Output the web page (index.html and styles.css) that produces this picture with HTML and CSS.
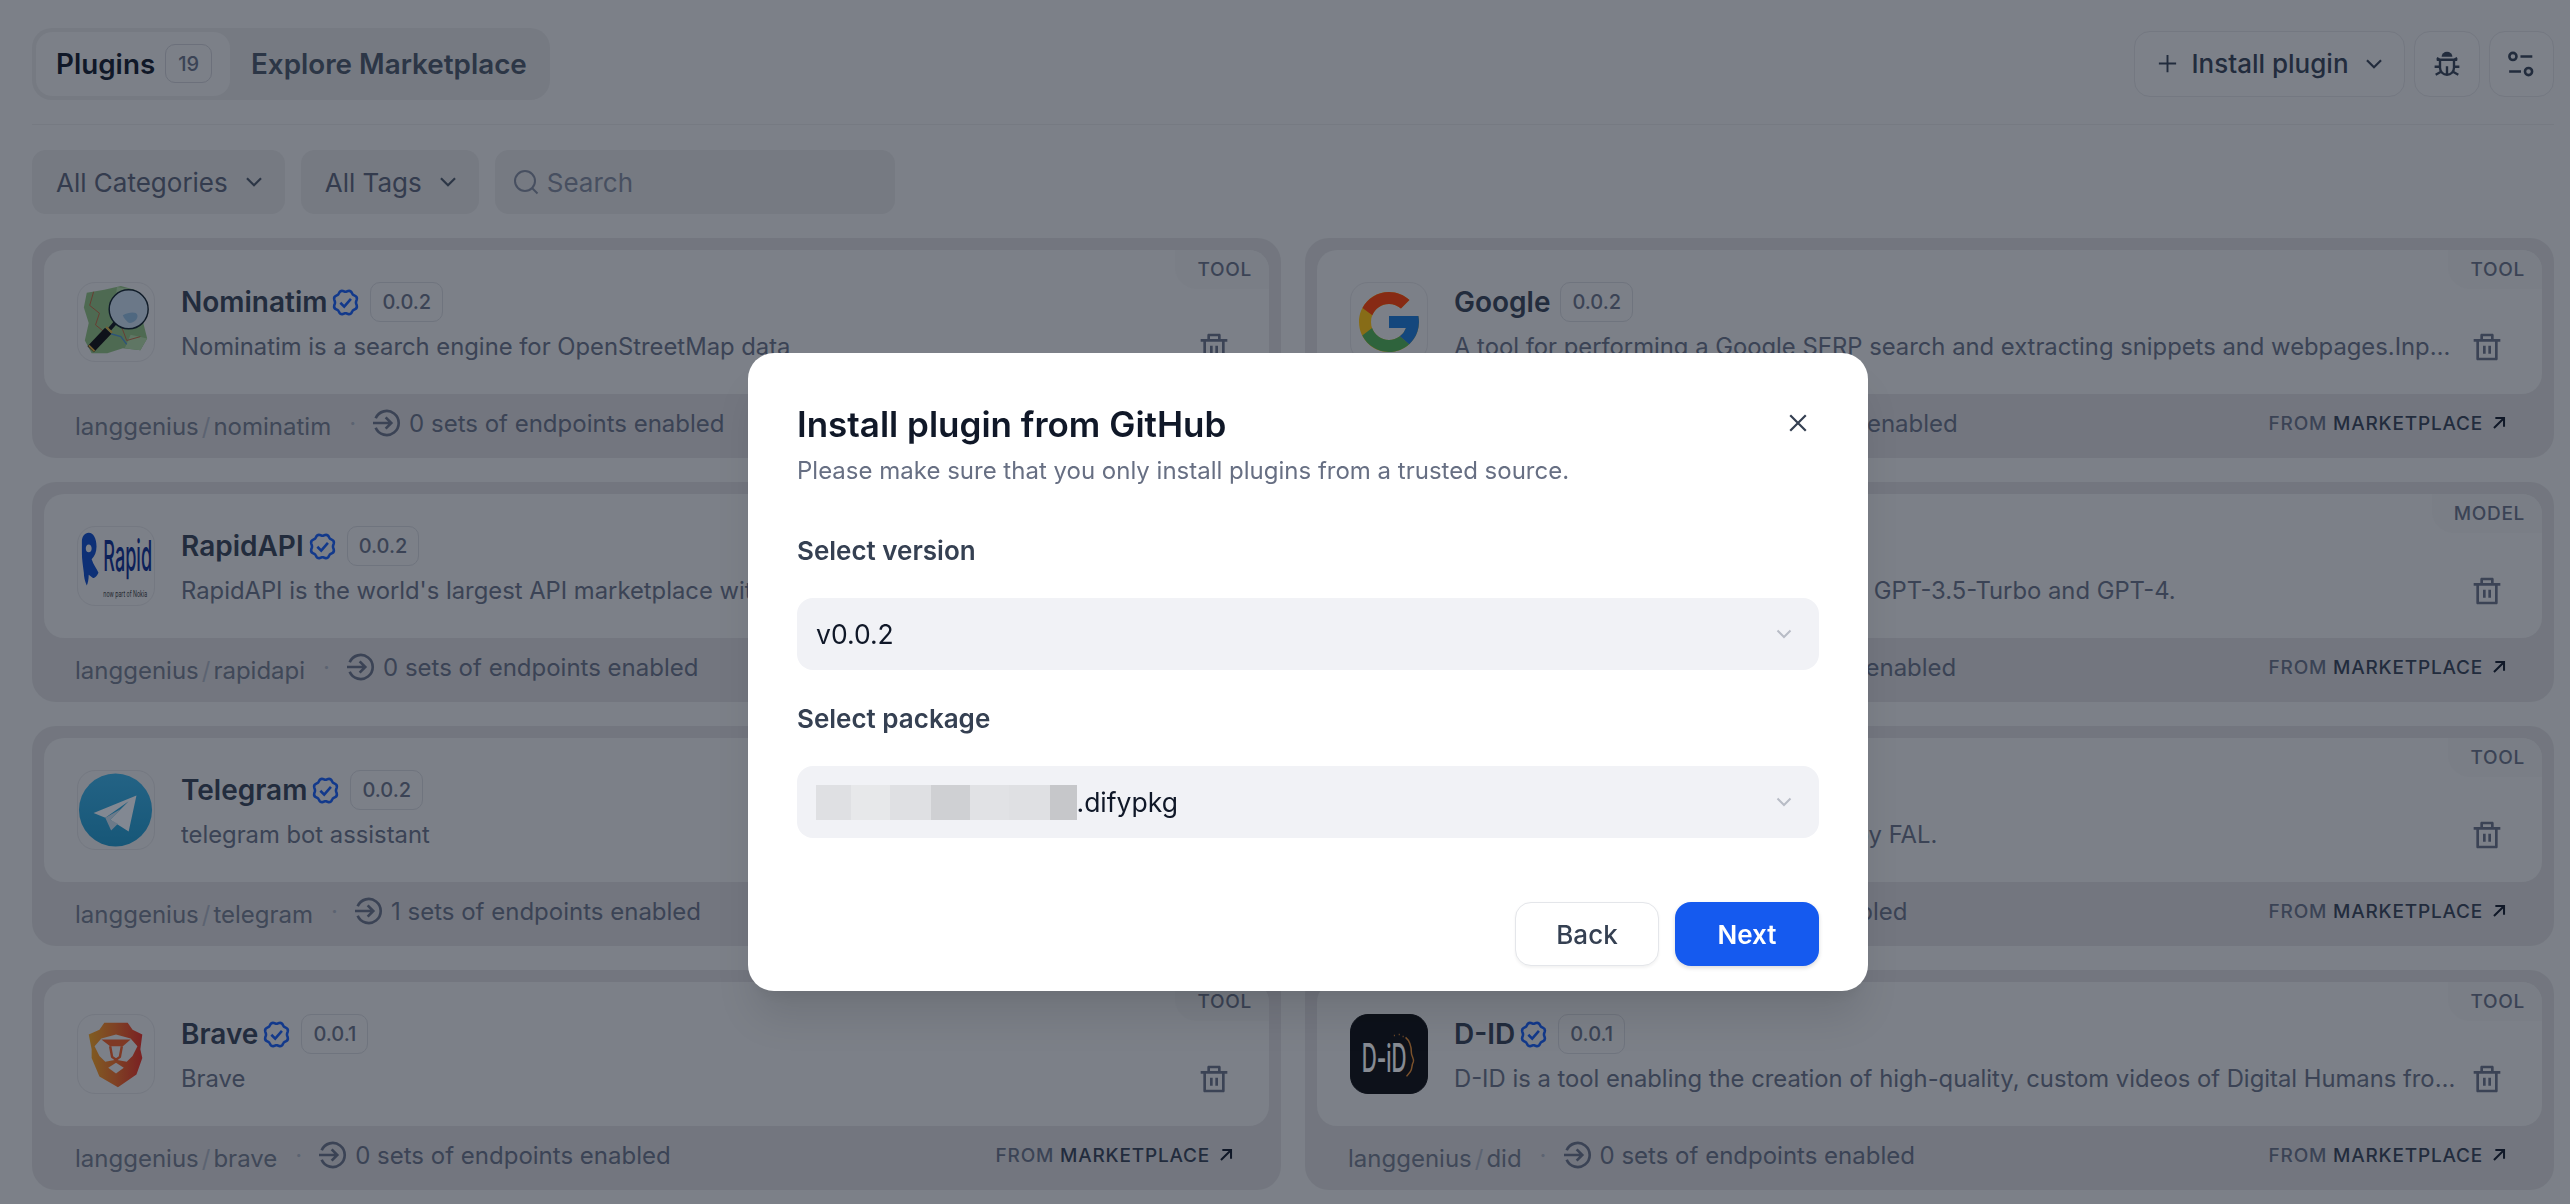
FILE: index.html
```html
<!DOCTYPE html>
<html lang="en">
<head>
<meta charset="utf-8">
<title>Plugins</title>
<link rel="stylesheet" href="styles.css">
</head>
<body>
<svg class="defs" width="0" height="0" aria-hidden="true">
  <symbol id="chev" viewBox="0 0 24 24"><path d="M5.5 8.5 12 15l6.5-6.5" fill="none" stroke="currentColor" stroke-width="2"/></symbol>
  <symbol id="trash" viewBox="0 0 24 24"><path fill="currentColor" d="M17 6H22V8H20V21C20 21.5523 19.5523 22 19 22H5C4.44772 22 4 21.5523 4 21V8H2V6H7V3C7 2.44772 7.44772 2 8 2H16C16.5523 2 17 2.44772 17 3V6ZM18 8H6V20H18V8ZM9 11H11V17H9V11ZM13 11H15V17H13V11ZM9 4V6H15V4H9Z"/></symbol>
  <symbol id="badge" viewBox="0 0 24 24"><path fill="none" stroke="currentColor" stroke-width="2" d="M10 3.1C9 2.8 7.900 3.200 7.300 4.100L6.500 5.600C6.400 5.800 6.200 6 6 6.100L4.500 6.900C3.500 7.400 3 8.600 3.300 9.700L3.800 11.300C3.900 11.700 3.900 12.300 3.800 12.700L3.300 14.300C3 15.400 3.500 16.600 4.500 17.100L6 17.900C6.200 18 6.400 18.200 6.500 18.400L7.300 19.900C7.900 20.800 9 21.200 10 20.900L11.600 20.400C11.900 20.300 12.100 20.300 12.400 20.400L14 20.900C15 21.200 16.100 20.800 16.700 19.900L17.500 18.400C17.600 18.200 17.800 18 18 17.900L19.500 17.100C20.500 16.600 21 15.400 20.700 14.300L20.200 12.700C20.100 12.300 20.100 11.700 20.200 11.300L20.700 9.700C21 8.600 20.500 7.400 19.500 6.900L18 6.100C17.800 6 17.600 5.800 17.500 5.600L16.700 4.100C16.100 3.200 15 2.800 14 3.100L12.400 3.600C12.100 3.700 11.900 3.700 11.600 3.600Z"/><path fill="none" stroke="currentColor" stroke-width="2" d="M8 12.200l3 3 5.200-6"/></symbol>
  <symbol id="login" viewBox="0 0 24 24"><path fill="none" stroke="currentColor" stroke-width="2" d="M3.500 8.500A9 9 0 1 1 3.500 15.500M1.500 12H15M11 7.800 15.200 12 11 16.200"/></symbol>
  <symbol id="arrow" viewBox="0 0 24 24"><path fill="none" stroke="currentColor" stroke-width="2.200" d="M6.500 17.500 17 7M8 6.500h9.500V16"/></symbol>
</svg>

<div class="page">
  <header class="topbar">
    <nav class="tabs">
      <div class="tab tab-active">Plugins <span class="count">19</span></div>
      <div class="tab">Explore Marketplace</div>
    </nav>
    <div class="actions">
      <button class="btn btn-install">
        <svg class="plus" viewBox="0 0 24 24"><path d="M12 3v18M3 12h18" fill="none" stroke="currentColor" stroke-width="2"/></svg>
        <span>Install plugin</span>
        <svg class="chev-sm"><use href="#chev"/></svg>
      </button>
      <button class="btn btn-icon">
        <svg class="tool-ico" viewBox="0 0 26 26" fill="none" stroke="currentColor" stroke-width="2.200">
          <path d="M8 6.200a5 4.600 0 0 1 10 0z" fill="currentColor" stroke="none"/>
          <path d="M3.500 9h19M6.500 9v7.500a6.500 6.500 0 0 0 13 0V9M13 15v8M1.500 15.500h5M19.500 15.500h5M2.500 23l4.500-2.500M23.500 23 19 20.500M3.500 7.500 6.500 9M22.500 7.500 19.500 9"/>
        </svg>
      </button>
      <button class="btn btn-icon">
        <svg class="tool-ico" viewBox="0 0 26 26" fill="none" stroke="currentColor" stroke-width="2.400">
          <circle cx="5.500" cy="6" r="3.300"/><path d="M12.500 6h11M2 20h11"/><circle cx="20" cy="20" r="3.300"/>
        </svg>
      </button>
    </div>
  </header>

  <section class="filters">
    <div class="filter">All Categories <svg class="chev-sm"><use href="#chev"/></svg></div>
    <div class="filter">All Tags <svg class="chev-sm"><use href="#chev"/></svg></div>
    <div class="search">
      <svg class="search-ico" viewBox="0 0 26 26" fill="none" stroke="currentColor" stroke-width="2"><circle cx="12" cy="12" r="10"/><path d="M19 19l5.500 5.500"/></svg>
      Search
    </div>
  </section>

  <main class="grid">
    <!-- Nominatim -->
    <article class="card">
      <div class="card-body">
        <span class="tag">TOOL</span>
        <div class="logo">
          <svg viewBox="0 0 78 78">
            <path d="M9 9 27 6 44 2 58 6 65 22 67 40 71 56 64 68 46 66 30 71 14 71 7 58 11 40 6 24Z" fill="#8dbd7c"/>
            <path d="M40 3 58 6 64 24 50 30 38 20ZM54 52 71 56 64 68 48 66Z" fill="#aed5a0"/>
            <path d="M16 8 12 22 22 30 18 42 28 50 22 60M44 42 50 58 64 54" fill="none" stroke="#c0603c" stroke-width="1"/>
            <path d="M30 50 44 54 50 62" fill="none" stroke="#4a90c8" stroke-width="1.500"/>
            <circle cx="52" cy="26" r="20" fill="#c6d8e8" stroke="#10202a" stroke-width="1.500"/>
            <path d="M46 32c6-3 14-4 15 0 1 5-7 10-10 7-2-2-4-4-5-7Z" fill="#8fb8d8"/>
            <path d="M38 40 32 47" stroke="#10151c" stroke-width="4"/>
            <path d="M31 48 13 67" stroke="#0d0d0d" stroke-width="9"/>
            <path d="M29 44 35 50M11 63 17 69" stroke="#d9a93a" stroke-width="2"/>
          </svg>
        </div>
        <div class="info">
          <div class="title-row"><h3 class="name">Nominatim</h3><svg class="verified"><use href="#badge"/></svg><span class="ver">0.0.2</span></div>
          <div class="desc-row"><p class="desc">Nominatim is a search engine for OpenStreetMap data</p><svg class="trash"><use href="#trash"/></svg></div>
        </div>
      </div>
      <footer class="card-foot">
        <span class="org">langgenius<i class="slash">/</i>nominatim</span><span class="dot">·</span>
        <svg class="login"><use href="#login"/></svg><span class="endpoints">0 sets of endpoints enabled</span>
        <span class="source">FROM <b>MARKETPLACE</b><svg class="arrow"><use href="#arrow"/></svg></span>
      </footer>
    </article>

    <!-- Google -->
    <article class="card">
      <div class="card-body">
        <span class="tag">TOOL</span>
        <div class="logo">
          <svg viewBox="0 0 48 48" class="g-logo">
            <path fill="#FFC107" d="M43.611 20.083H42V20H24v8h11.303c-1.649 4.657-6.08 8-11.303 8-6.627 0-12-5.373-12-12s5.373-12 12-12c3.059 0 5.842 1.154 7.961 3.039l5.657-5.657C34.046 6.053 29.268 4 24 4 12.955 4 4 12.955 4 24s8.955 20 20 20 20-8.955 20-20c0-1.341-.138-2.65-.389-3.917z"/>
            <path fill="#FF3D00" d="M6.306 14.691l6.571 4.819C14.655 15.108 18.961 12 24 12c3.059 0 5.842 1.154 7.961 3.039l5.657-5.657C34.046 6.053 29.268 4 24 4 16.318 4 9.656 8.337 6.306 14.691z"/>
            <path fill="#4CAF50" d="M24 44c5.166 0 9.86-1.977 13.409-5.192l-6.19-5.238A11.91 11.91 0 0 1 24 36c-5.202 0-9.619-3.317-11.283-7.946l-6.522 5.025C9.505 39.556 16.227 44 24 44z"/>
            <path fill="#1976D2" d="M43.611 20.083H42V20H24v8h11.303a12.04 12.04 0 0 1-4.087 5.571l6.193 5.237C36.971 39.205 44 34 44 24c0-1.341-.138-2.65-.389-3.917z"/>
          </svg>
        </div>
        <div class="info">
          <div class="title-row"><h3 class="name">Google</h3><span class="ver">0.0.2</span></div>
          <div class="desc-row"><p class="desc">A tool for performing a Google SERP search and extracting snippets and webpages.Input should be a search query.</p><svg class="trash"><use href="#trash"/></svg></div>
        </div>
      </div>
      <footer class="card-foot">
        <span class="org">langgenius<i class="slash">/</i>google</span><span class="dot">·</span>
        <svg class="login"><use href="#login"/></svg><span class="endpoints">0 sets of endpoints enabled</span>
        <span class="source">FROM <b>MARKETPLACE</b><svg class="arrow"><use href="#arrow"/></svg></span>
      </footer>
    </article>

    <!-- RapidAPI -->
    <article class="card">
      <div class="card-body">
        <span class="tag">TOOL</span>
        <div class="logo">
          <svg viewBox="0 0 78 78">
            <path fill-rule="evenodd" d="M11 5C16 5 19 11 19 19C19 25 17 29 14 32C16 38 19 41 21 46C19 50 17 52 15 51L11 48C11 53 10 57 9 59C7 55 6 50 6 46C5 38 4 32 4 26V14C4 9 7 5 11 5ZM11 17c-2 0-3 2-3 4s1 4 3 4 3-2 3-4-1-4-3-4Z" fill="#0b49c4"/>
            <text class="rapid" x="26" y="44" textLength="50" lengthAdjust="spacingAndGlyphs">Rapid</text>
            <text class="rapid-sub" x="26" y="71" textLength="45" lengthAdjust="spacingAndGlyphs">now part of Nokia</text>
          </svg>
        </div>
        <div class="info">
          <div class="title-row"><h3 class="name">RapidAPI</h3><svg class="verified"><use href="#badge"/></svg><span class="ver">0.0.2</span></div>
          <div class="desc-row"><p class="desc">RapidAPI is the world's largest API marketplace with over 1,000,000 developers and 10,000 APIs.</p><svg class="trash"><use href="#trash"/></svg></div>
        </div>
      </div>
      <footer class="card-foot">
        <span class="org">langgenius<i class="slash">/</i>rapidapi</span><span class="dot">·</span>
        <svg class="login"><use href="#login"/></svg><span class="endpoints">0 sets of endpoints enabled</span>
        <span class="source">FROM <b>MARKETPLACE</b><svg class="arrow"><use href="#arrow"/></svg></span>
      </footer>
    </article>

    <!-- OpenAI -->
    <article class="card">
      <div class="card-body">
        <span class="tag">MODEL</span>
        <div class="logo"></div>
        <div class="info">
          <div class="title-row"><h3 class="name">OpenAI</h3><span class="ver">0.0.2</span></div>
          <div class="desc-row"><p class="desc">Models provided by OpenAI, such as GPT-3.5-Turbo and GPT-4.</p><svg class="trash"><use href="#trash"/></svg></div>
        </div>
      </div>
      <footer class="card-foot">
        <span class="org">langgenius<i class="slash">/</i>openai</span><span class="dot">·</span>
        <svg class="login"><use href="#login"/></svg><span class="endpoints">0 sets of endpoints enabled</span>
        <span class="source">FROM <b>MARKETPLACE</b><svg class="arrow"><use href="#arrow"/></svg></span>
      </footer>
    </article>

    <!-- Telegram -->
    <article class="card">
      <div class="card-body">
        <span class="tag">TOOL</span>
        <div class="logo">
          <svg viewBox="0 0 78 78">
            <defs><linearGradient id="tg" x1="0" y1="0" x2="0" y2="1"><stop offset="0" stop-color="#37aee2"/><stop offset="1" stop-color="#1e96c8"/></linearGradient></defs>
            <circle cx="38.500" cy="39" r="37.500" fill="url(#tg)"/>
            <path d="M60 24 16 42 28 47 52 30 33 49 52 61Z" fill="#f4f9fc"/>
            <path d="M28 47 34 60 41 53 33 49 44 38Z" fill="#c9dcea"/>
          </svg>
        </div>
        <div class="info">
          <div class="title-row"><h3 class="name">Telegram</h3><svg class="verified"><use href="#badge"/></svg><span class="ver">0.0.2</span></div>
          <div class="desc-row"><p class="desc">telegram bot assistant</p><svg class="trash"><use href="#trash"/></svg></div>
        </div>
      </div>
      <footer class="card-foot">
        <span class="org">langgenius<i class="slash">/</i>telegram</span><span class="dot">·</span>
        <svg class="login"><use href="#login"/></svg><span class="endpoints">1 sets of endpoints enabled</span>
        <span class="source">FROM <b>MARKETPLACE</b><svg class="arrow"><use href="#arrow"/></svg></span>
      </footer>
    </article>

    <!-- Fal -->
    <article class="card">
      <div class="card-body">
        <span class="tag">TOOL</span>
        <div class="logo"></div>
        <div class="info">
          <div class="title-row"><h3 class="name">Fal</h3><span class="ver">0.0.2</span></div>
          <div class="desc-row"><p class="desc">Generate images with Flux models, by FAL.</p><svg class="trash"><use href="#trash"/></svg></div>
        </div>
      </div>
      <footer class="card-foot">
        <span class="org">langgenius<i class="slash">/</i>fal</span><span class="dot">·</span>
        <svg class="login"><use href="#login"/></svg><span class="endpoints">0 sets of endpoints enabled</span>
        <span class="source">FROM <b>MARKETPLACE</b><svg class="arrow"><use href="#arrow"/></svg></span>
      </footer>
    </article>

    <!-- Brave -->
    <article class="card">
      <div class="card-body">
        <span class="tag">TOOL</span>
        <div class="logo">
          <svg viewBox="0 0 78 78">
            <defs><linearGradient id="br" x1="0" y1="0" x2="1" y2="0"><stop offset="0" stop-color="#f2a31c"/><stop offset="0.5" stop-color="#ee6a20"/><stop offset="1" stop-color="#e52b1f"/></linearGradient></defs>
            <path d="M27 7H51L56 14 66 19 64 34 66 43 60 60 41 73 22 62 14 43 14 34 11 19 22 14Z" fill="url(#br)"/>
            <path d="M17 31 24 23 39 19 54 23 61 31 56 41 50 47 39 45 28 47 22 41Z" fill="#e8e8e8"/>
            <path d="M24 24H54L46 31H33Z" fill="#ee5a20"/>
            <path d="M33 31 35 42 39 45 43 42 45 31" fill="none" stroke="#ee5a20" stroke-width="2.500"/>
            <path d="M31 53 39 48 47 53 39 59Z" fill="#e8e8e8"/>
          </svg>
        </div>
        <div class="info">
          <div class="title-row"><h3 class="name">Brave</h3><svg class="verified"><use href="#badge"/></svg><span class="ver">0.0.1</span></div>
          <div class="desc-row"><p class="desc">Brave</p><svg class="trash"><use href="#trash"/></svg></div>
        </div>
      </div>
      <footer class="card-foot">
        <span class="org">langgenius<i class="slash">/</i>brave</span><span class="dot">·</span>
        <svg class="login"><use href="#login"/></svg><span class="endpoints">0 sets of endpoints enabled</span>
        <span class="source">FROM <b>MARKETPLACE</b><svg class="arrow"><use href="#arrow"/></svg></span>
      </footer>
    </article>

    <!-- D-ID -->
    <article class="card">
      <div class="card-body">
        <span class="tag">TOOL</span>
        <div class="logo logo-dark">
          <svg viewBox="0 0 78 78">
            <text class="did" x="11" y="57" textLength="46" lengthAdjust="spacingAndGlyphs">D-iD</text>
            <path d="M56 22c6 5 6 14 6 16 0 3 3 6 2 9-2 3-1 8-3 10l-4 5" fill="none" stroke="#e58a2e" stroke-width="1.500"/>
            <path d="M44 20h1M49 19h1M53 21h1" stroke="#e58a2e" stroke-width="1.500"/>
          </svg>
        </div>
        <div class="info">
          <div class="title-row"><h3 class="name">D-ID</h3><svg class="verified"><use href="#badge"/></svg><span class="ver">0.0.1</span></div>
          <div class="desc-row"><p class="desc">D-ID is a tool enabling the creation of high-quality, custom videos of Digital Humans from a single image.</p><svg class="trash"><use href="#trash"/></svg></div>
        </div>
      </div>
      <footer class="card-foot">
        <span class="org">langgenius<i class="slash">/</i>did</span><span class="dot">·</span>
        <svg class="login"><use href="#login"/></svg><span class="endpoints">0 sets of endpoints enabled</span>
        <span class="source">FROM <b>MARKETPLACE</b><svg class="arrow"><use href="#arrow"/></svg></span>
      </footer>
    </article>
  </main>
</div>

<div class="overlay"></div>

<div class="modal" role="dialog">
  <svg class="close" viewBox="0 0 18 18"><path d="M2 2l14 14M16 2 2 16" fill="none" stroke="currentColor" stroke-width="2"/></svg>
  <h2 class="modal-title">Install plugin from GitHub</h2>
  <p class="modal-sub">Please make sure that you only install plugins from a trusted source.</p>
  <label class="field-label first">Select version</label>
  <div class="select"><span>v0.0.2</span><svg class="select-chev"><use href="#chev"/></svg></div>
  <label class="field-label">Select package</label>
  <div class="select">
    <span class="pixels"><i class="px px1"></i><i class="px px2"></i><i class="px px3"></i><i class="px px4"></i><i class="px px5"></i><i class="px px6"></i><i class="px px7"></i></span><span>.difypkg</span>
    <svg class="select-chev"><use href="#chev"/></svg>
  </div>
  <div class="modal-actions">
    <button class="m-btn m-back">Back</button>
    <button class="m-btn m-next">Next</button>
  </div>
</div>
</body>
</html>
```

FILE: styles.css
```css
* { box-sizing: border-box; }
html, body { margin: 0; padding: 0; height: 100%; overflow: hidden; }
body {
  background: #e8e8e8;
  font-family: Inter, "Noto Sans", "Liberation Sans", sans-serif;
  color: #354052;
}
.defs { position: absolute; }
h2, h3, p { margin: 0; }
button { font-family: inherit; }

.page { padding: 28px 16px 0 32px; }

/* top bar */
.topbar {
  display: flex;
  justify-content: space-between;
  align-items: center;
  height: 97px;
  padding-bottom: 25px;
  border-bottom: 1.5px solid #dcdcdc;
}
.tabs {
  display: flex;
  height: 72px;
  width: 518px;
  padding: 4px;
  background: #dcdcdc;
  border-radius: 20px;
}
.tab {
  display: flex;
  align-items: center;
  padding: 0 0 0 21px;
  font-size: 27.800px;
  font-weight: 600;
  color: #495464;
  white-space: nowrap;
}
.tab-active {
  width: 194px;
  padding-left: 20px;
  background: #e8e8e8;
  border-radius: 16px;
  color: #101828;
  gap: 10px;
}
.count {
  display: inline-flex;
  align-items: center;
  justify-content: center;
  width: 47px;
  height: 39px;
  border: 1.6px solid #c8c9ce;
  border-radius: 10px;
  font-size: 20px;
  font-weight: 500;
  color: #676f83;
}
.actions { display: flex; gap: 9px; height: 66px; }
.btn {
  height: 66px;
  display: flex;
  align-items: center;
  justify-content: center;
  background: #eaeaeb;
  border: 1.6px solid #d8d8da;
  border-radius: 16px;
  color: #354052;
  padding: 0;
}
.btn-install { width: 271px; padding-left: 4px; font-size: 26px; font-weight: 500; gap: 12px; }
.btn-icon { width: 65.500px; }
.plus { width: 23px; height: 23px; }
.chev-sm { width: 26px; height: 26px; color: #495464; }
.btn-install .chev-sm { color: #354052; }
.tool-ico { width: 28px; height: 28px; }

/* filters */
.filters { display: flex; gap: 16px; margin-top: 25px; height: 64px; }
.filter, .search {
  display: flex;
  align-items: center;
  background: #dcdcdc;
  border-radius: 14px;
  font-size: 26px;
  font-weight: 400;
  color: #596175;
}
.filter { padding: 0 18px 0 24px; gap: 13px; }
.search { width: 400px; padding-left: 18px; gap: 8px; color: #7f8799; }
.search-ico { width: 26px; height: 26px; }

/* grid */
.grid {
  display: grid;
  grid-template-columns: 1249px 1249px;
  column-gap: 24px;
  row-gap: 24px;
  margin-top: 24px;
}
.card {
  height: 220px;
  padding: 12px 12px 0;
  background: #d6d5d6;
  border-radius: 24px;
}
.card-body {
  position: relative;
  height: 144px;
  display: flex;
  gap: 26px;
  padding: 32px 32px 0 33px;
  background: #e8e8e8;
  border-radius: 20px;
}
.tag {
  position: absolute;
  top: 0;
  right: 0;
  height: 39px;
  padding: 0 17px 0 22px;
  display: flex;
  align-items: center;
  font-size: 19px;
  font-weight: 500;
  letter-spacing: 0.7px;
  color: #676f83;
  background: #e4e4e4;
  border-radius: 0 20px 0 22px;
}
.logo {
  flex: none;
  width: 78px;
  height: 80px;
  border: 1.6px solid #d8d8da;
  border-radius: 18px;
  background: #e8e8e8;
  overflow: hidden;
}
.logo svg { display: block; width: 100%; height: 100%; }
.logo .g-logo { width: 72px; height: 72px; margin: 3px auto; }
.logo-dark { background: #0a0a0c; border-color: #0a0a0c; }
.rapid { font: 500 44px Inter, sans-serif; fill: #0a2a8c; }
.rapid-sub { font: 400 9px Inter, sans-serif; fill: #333; }
.did { font: 500 40px Inter, sans-serif; fill: #fff; }

.info { flex: 1; min-width: 0; }
.title-row { display: flex; align-items: center; height: 40px; }
.name { font-size: 28px; font-weight: 600; line-height: 40px; color: #354052; }
.verified { width: 31px; height: 31px; margin-left: 3px; color: #155aef; flex: none; }
.ver {
  margin-left: 9px;
  padding: 0 11px;
  height: 40px;
  display: flex;
  align-items: center;
  justify-content: center;
  border: 1.6px solid #cfd0d4;
  border-radius: 10px;
  font-size: 20px;
  font-weight: 500;
  color: #676f83;
}
.name + .ver { margin-left: 10px; }
.desc-row { display: flex; align-items: center; margin-top: 7px; height: 36px; }
.desc {
  flex: 0 1 auto;
  width: 1004px;
  font-size: 23.800px;
  line-height: 36px;
  color: #676f83;
  white-space: nowrap;
  overflow: hidden;
  text-overflow: ellipsis;
}
.trash { width: 32px; height: 32px; margin-left: 13px; flex: none; color: #676f83; }

.card-foot {
  height: 64px;
  display: flex;
  align-items: center;
  padding: 0 32px 6px 31px;
  font-size: 24px;
  color: #676f83;
}
.org { margin-top: 6px; color: #707889; }
.slash { font-style: normal; margin: 0 3px; color: #a8aebb; }
.dot { margin: 0 18px; color: #a8aebb; }
.login { width: 32px; height: 32px; margin-right: 6px; margin-left: -3px; color: #676f83; flex: none; }
.source {
  margin-left: auto;
  display: flex;
  align-items: center;
  font-size: 19px;
  font-weight: 500;
  letter-spacing: 0.8px;
  white-space: pre;
  color: #676f83;
}
.source b { font-weight: 500; color: #354052; }
.arrow { width: 22px; height: 22px; margin-left: 5px; color: #101828; }

/* overlay and modal */
.overlay { position: fixed; inset: 0; background: rgba(16, 24, 40, 0.5); }
.modal {
  position: absolute;
  left: 748px;
  top: 353px;
  width: 1120px;
  height: 638px;
  padding: 51px 49px 0;
  background: #fff;
  border-radius: 26px;
  box-shadow: 0 32px 40px -7px rgba(9, 9, 11, 0.1), 0 13px 13px -7px rgba(9, 9, 11, 0.05);
}
.close { position: absolute; top: 60px; right: 60px; width: 20px; height: 20px; color: #354052; }
.modal-title { font-size: 35px; font-weight: 600; line-height: 40px; color: #101828; }
.modal-sub { margin-top: 9px; font-size: 24px; line-height: 36px; color: #676f83; }
.field-label { display: block; margin-top: 31px; font-size: 26px; font-weight: 600; line-height: 36px; color: #354052; }
.field-label.first { margin-top: 44px; }
.select {
  margin-top: 29px;
  height: 72px;
  display: flex;
  align-items: center;
  padding: 0 23px 0 19px;
  background: #f1f2f6;
  border-radius: 16px;
  font-size: 26.500px;
  color: #101828;
}
.pixels { display: flex; height: 35px; }
.px { display: block; height: 35px; }
.px1 { width: 34.500px; background: #dfe0e3; }
.px2 { width: 39.500px; background: #e7e8ea; }
.px3 { width: 40.500px; background: #dfe0e3; }
.px4 { width: 39px; background: #cfd0d3; }
.px5 { width: 39.500px; background: #e1e2e5; }
.px6 { width: 40.500px; background: #dfe0e3; }
.px7 { width: 27px; background: #c6c7ca; }
.select-chev { margin-left: auto; width: 24px; height: 24px; color: #b8bcc6; }
.modal-actions { display: flex; justify-content: flex-end; gap: 16px; margin-top: 64px; }
.m-btn {
  width: 144px;
  height: 64px;
  border-radius: 16px;
  font-size: 26px;
  font-weight: 500;
  cursor: pointer;
}
.m-back { background: #fff; border: 1.6px solid #e4e6ea; color: #354052; box-shadow: 0 1.600px 3px rgba(9, 9, 11, 0.05); }
.m-next { background: #155aef; border: none; color: #fff; font-weight: 600; box-shadow: 0 2px 4px rgba(9, 9, 11, 0.15); }
```
